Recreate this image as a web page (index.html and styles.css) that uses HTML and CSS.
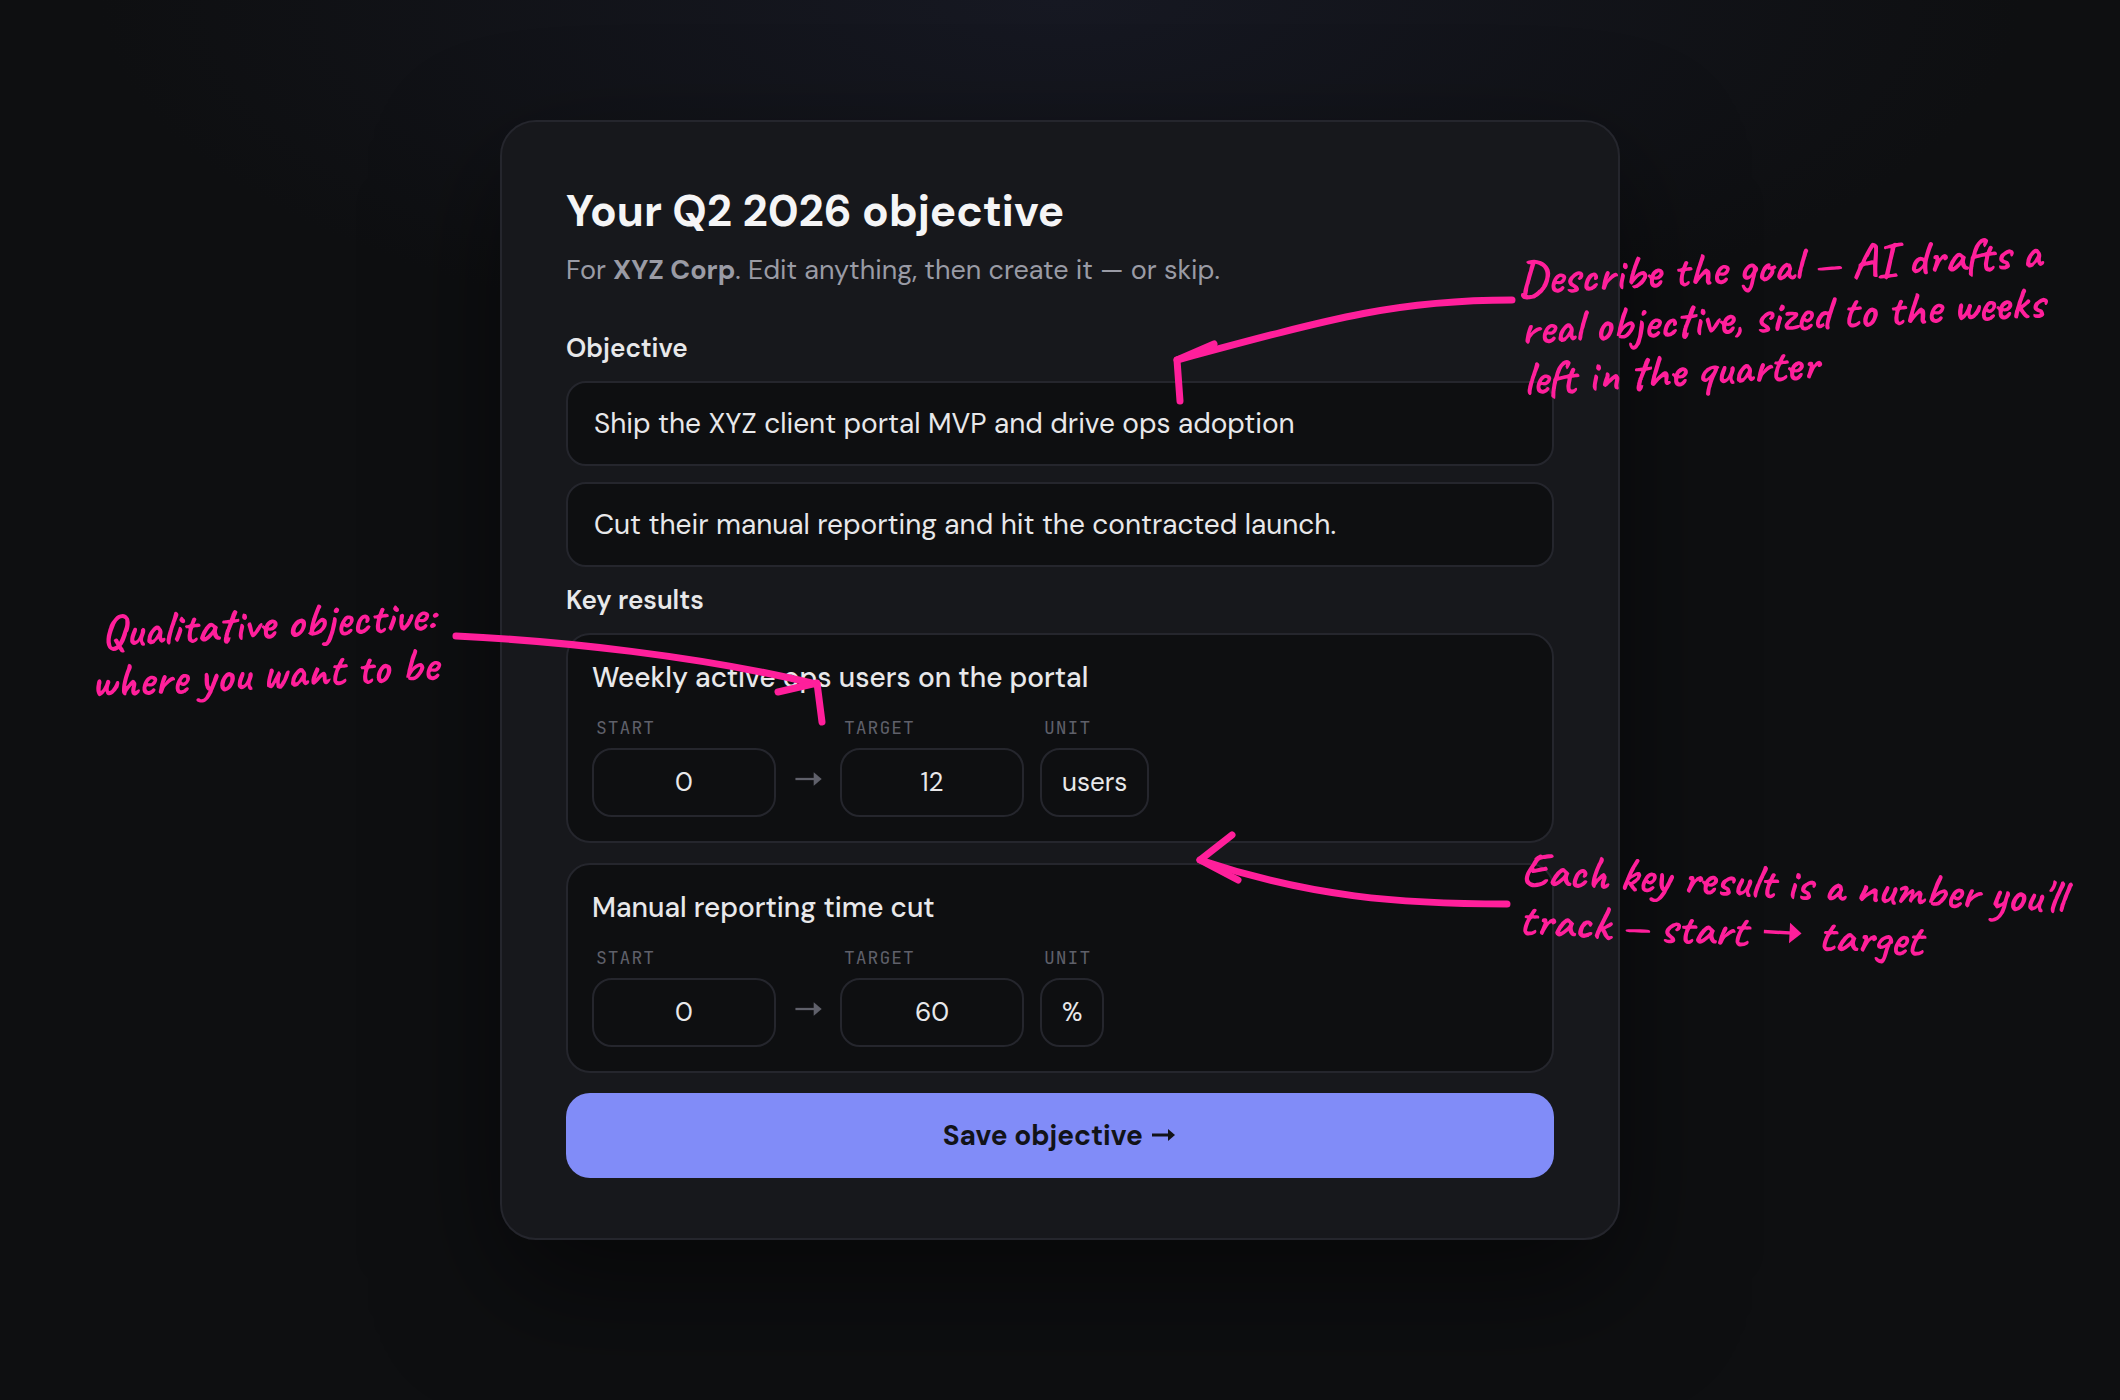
FILE: index.html
```
<!DOCTYPE html>
<html lang="en">
<head>
    <meta charset="UTF-8">
    <meta name="viewport" content="width=device-width, initial-scale=1.0">
    <title>Your Q2 2026 objective</title>
    <link rel="stylesheet" href="styles.css">
</head>
<body>
<main class="board">
    <form class="card">
        <h1>Your Q2 2026 objective</h1>
        <p class="subtitle">For <strong>XYZ Corp</strong>. Edit anything, then create it — or skip.</p>

        <label class="section-label" for="objective">Objective</label>
        <div class="objective">
            <input class="text-input" type="text" id="objective" value="Ship the XYZ client portal MVP and drive ops adoption">
            <input class="text-input" type="text" aria-label="Objective description" value="Cut their manual reporting and hit the contracted launch.">
        </div>

        <h2 class="section-label">Key results</h2>
        <div class="key-results">
            <section class="key-result">
                <input class="kr-title" type="text" aria-label="Key result 1" value="Weekly active ops users on the portal">
                <div class="kr-fields">
                    <div class="field">
                        <label for="start1">START</label>
                        <input class="number" type="text" id="start1" value="0">
                    </div>
                    <svg class="arrow" viewBox="0 0 28 28" aria-label="to"><path d="M3 14 H20"/><path class="head" d="M19 8 L26 14 L19 20 Z"/></svg>
                    <div class="field">
                        <label for="target1">TARGET</label>
                        <input class="number" type="text" id="target1" value="12">
                    </div>
                    <div class="field">
                        <label for="unit1">UNIT</label>
                        <input class="unit" type="text" id="unit1" value="users">
                    </div>
                </div>
            </section>

            <section class="key-result">
                <input class="kr-title" type="text" aria-label="Key result 2" value="Manual reporting time cut">
                <div class="kr-fields">
                    <div class="field">
                        <label for="start2">START</label>
                        <input class="number" type="text" id="start2" value="0">
                    </div>
                    <svg class="arrow" viewBox="0 0 28 28" aria-label="to"><path d="M3 14 H20"/><path class="head" d="M19 8 L26 14 L19 20 Z"/></svg>
                    <div class="field">
                        <label for="target2">TARGET</label>
                        <input class="number" type="text" id="target2" value="60">
                    </div>
                    <div class="field">
                        <label for="unit2">UNIT</label>
                        <input class="unit" type="text" id="unit2" value="%">
                    </div>
                </div>
            </section>
        </div>

        <button type="button" class="save-btn">Save objective <svg class="arrow" viewBox="0 0 28 28" aria-hidden="true"><path d="M3 14 H20"/><path class="head" d="M19 8 L26 14 L19 20 Z"/></svg></button>
    </form>

    <!-- hand-drawn arrows and notes over the card -->
    <svg class="sketch" aria-hidden="true">
        <path d="M1012 180 C900 180 840 196 677 240"/>
        <path d="M714 224 L677 240 L680 281"/>
        <path d="M-44 516 C60 521 200 536 316 564"/>
        <path d="M278 572 L317 563 L322 602"/>
        <path d="M1007 784 C900 784 810 777 700 740"/>
        <path d="M732 715 L700 740 L738 760"/>
    </svg>
    <p class="note note-describe">Describe the goal — AI drafts a<br>real objective, sized to the weeks<br>left in the quarter</p>
    <p class="note note-objective">Qualitative objective:<br>where you want to be</p>
    <p class="note note-result">Each key result is a number you'll<br>track — start <svg class="arrow" viewBox="0 0 28 28" aria-label="to"><path d="M3 14 H20"/><path class="head" d="M18 8 L25 14 L18 20 Z"/></svg> target</p>
</main>
</body>
</html>
```
FILE: styles.css
```
* {
    box-sizing: border-box;
}
body {
    margin: 0;
    min-height: 100vh;
    padding: 120px 40px;
    background: radial-gradient(ellipse 960px 360px at 50% 0, #161822, #0e0f11) #0e0f11;
    color: #e8e8ea;
    font-family: "DM Sans", Inter, sans-serif;
    font-size: 28px;
    line-height: 37px;
    overflow-x: hidden;
}
input, button {
    font: inherit;
    color: inherit;
}
.board {
    position: relative;
    max-width: 1120px;
    margin: 0 auto;
}
.card {
    padding: 64px 64px 60px;
    background: #17181c;
    border: 2px solid #25262d;
    border-radius: 36px;
    box-shadow: 0 48px 120px rgba(0, 0, 0, 0.5);
}
h1 {
    margin: 0 0 16px;
    font-size: 44px;
    line-height: 50px;
    font-weight: 700;
    color: #f5f5f6;
}
.subtitle {
    margin: 0 0 43px;
    font-size: 27px;
    line-height: 36px;
    color: #9a9ba5;
}
.section-label {
    display: block;
    margin: 0 0 16px;
    font-size: 26px;
    line-height: 34px;
    font-weight: 600;
}
.objective {
    display: flex;
    flex-direction: column;
    gap: 16px;
    margin-bottom: 16px;
}
.text-input {
    width: 100%;
    padding: 22px 26px;
    background: #0e0f11;
    border: 2px solid #25262d;
    border-radius: 20px;
}
.key-results {
    display: flex;
    flex-direction: column;
    gap: 20px;
    margin-bottom: 20px;
}
.key-result {
    padding: 24px;
    background: #0e0f11;
    border: 2px solid #25262d;
    border-radius: 24px;
}
.kr-title {
    display: block;
    width: 100%;
    margin-bottom: 20px;
    padding: 0;
    background: none;
    border: none;
    font-weight: 500;
}
.kr-fields {
    display: flex;
    align-items: flex-end;
    gap: 16px;
}
.field label {
    display: block;
    margin-bottom: 8px;
    padding-left: 4px;
    font-family: "JetBrains Mono", "DejaVu Sans Mono", monospace;
    font-size: 18px;
    line-height: 24px;
    letter-spacing: 1px;
    color: #5f606a;
}
.field input {
    display: block;
    padding: 16px 20px;
    background: #0e0f11;
    border: 2px solid #25262d;
    border-radius: 20px;
    font-size: 26px;
    line-height: 33px;
}
.field .number {
    width: 184px;
    text-align: center;
}
.field .unit {
    field-sizing: content;
}
.arrow {
    width: 28px;
    height: 28px;
    vertical-align: -4px;
    fill: none;
    stroke: currentColor;
    stroke-width: 2;
}
.arrow .head {
    fill: currentColor;
    stroke: none;
}
.kr-fields .arrow {
    width: 32px;
    height: 32px;
    margin-bottom: 22px;
    color: #5f606a;
}
.save-btn {
    display: block;
    width: 100%;
    padding: 24px;
    background: #818cf8;
    border: none;
    border-radius: 24px;
    color: #121318;
    font-weight: 700;
    cursor: pointer;
}
.save-btn .arrow {
    stroke-width: 3;
}
.sketch {
    position: absolute;
    inset: 0;
    width: 100%;
    height: 100%;
    overflow: visible;
    fill: none;
    stroke: #ff1f9b;
    stroke-width: 7;
    stroke-linecap: round;
    stroke-linejoin: round;
    pointer-events: none;
}
.note {
    position: absolute;
    margin: 0;
    font-family: Caveat, cursive;
    font-size: 48px;
    line-height: 50px;
    font-weight: 700;
    color: #ff1f9b;
    white-space: nowrap;
}
.note .arrow {
    width: 48px;
    height: 48px;
    vertical-align: -8px;
}
.note-describe {
    top: 120px;
    left: 1020px;
    transform: rotate(-3deg);
}
.note-objective {
    top: 478px;
    right: 1184px;
    text-align: right;
    transform: rotate(-3deg);
}
.note-result {
    top: 738px;
    left: 1020px;
    transform: rotate(3deg);
}
```
